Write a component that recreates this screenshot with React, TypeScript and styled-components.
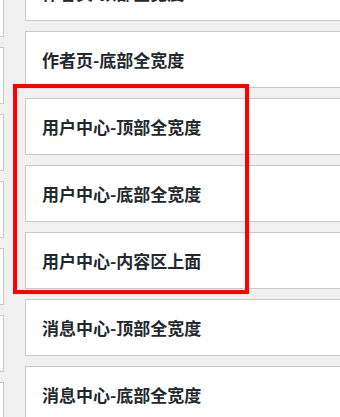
import React from "react";
import styled, { createGlobalStyle } from "styled-components";

const GlobalStyle = createGlobalStyle`
  html, body {
    margin: 0;
    padding: 0;
    background: #f0f0f0;
  }
`;

const sideItems = [0, 1, 2, 3, 4, 5, 6];

const mainItems = [
  "作者页-顶部全宽度",
  "作者页-底部全宽度",
  "用户中心-顶部全宽度",
  "用户中心-底部全宽度",
  "用户中心-内容区上面",
  "消息中心-顶部全宽度",
  "消息中心-底部全宽度",
];

export default function App() {
  return (
    <>
      <GlobalStyle />
      <Page>
        <SideColumn>
          {sideItems.map((i) => (
            <SideCard key={i} />
          ))}
        </SideColumn>

        <MainColumn>
          {mainItems.map((name) => (
            <WidgetCard key={name}>
              <WidgetTitle>{name}</WidgetTitle>
            </WidgetCard>
          ))}
        </MainColumn>

        <Highlight />
      </Page>
    </>
  );
}

const Page = styled.div`
  position: relative;
  display: flex;
  gap: 21px;
  width: 340px;
  height: 417px;
  overflow: hidden;
  background: #f0f0f0;
`;

const SideColumn = styled.div`
  flex: 0 0 60px;
  margin-left: -56px;
  margin-top: -20px;
  display: flex;
  flex-direction: column;
  gap: 10px;
`;

const SideCard = styled.div`
  box-sizing: border-box;
  height: 57px;
  flex: 0 0 57px;
  background: #fff;
  border: 1px solid #c8c8c8;
`;

const MainColumn = styled.div`
  flex: 0 0 360px;
  margin-top: -36px;
  display: flex;
  flex-direction: column;
  gap: 10px;
`;

const WidgetCard = styled.div`
  box-sizing: border-box;
  height: 57px;
  flex: 0 0 57px;
  display: flex;
  align-items: center;
  padding-left: 16px;
  background: #fff;
  border: 1px solid #c8c8c8;
`;

const WidgetTitle = styled.h3`
  margin: 0;
  font-family: "Noto Sans CJK SC", "Noto Sans", sans-serif;
  font-size: 17px;
  font-weight: 700;
  line-height: 1;
  color: #23282d;
`;

const Highlight = styled.div`
  position: absolute;
  left: 13px;
  top: 84px;
  width: 236px;
  height: 210px;
  box-sizing: border-box;
  border: 4px solid #ff0000;
  pointer-events: none;
`;
